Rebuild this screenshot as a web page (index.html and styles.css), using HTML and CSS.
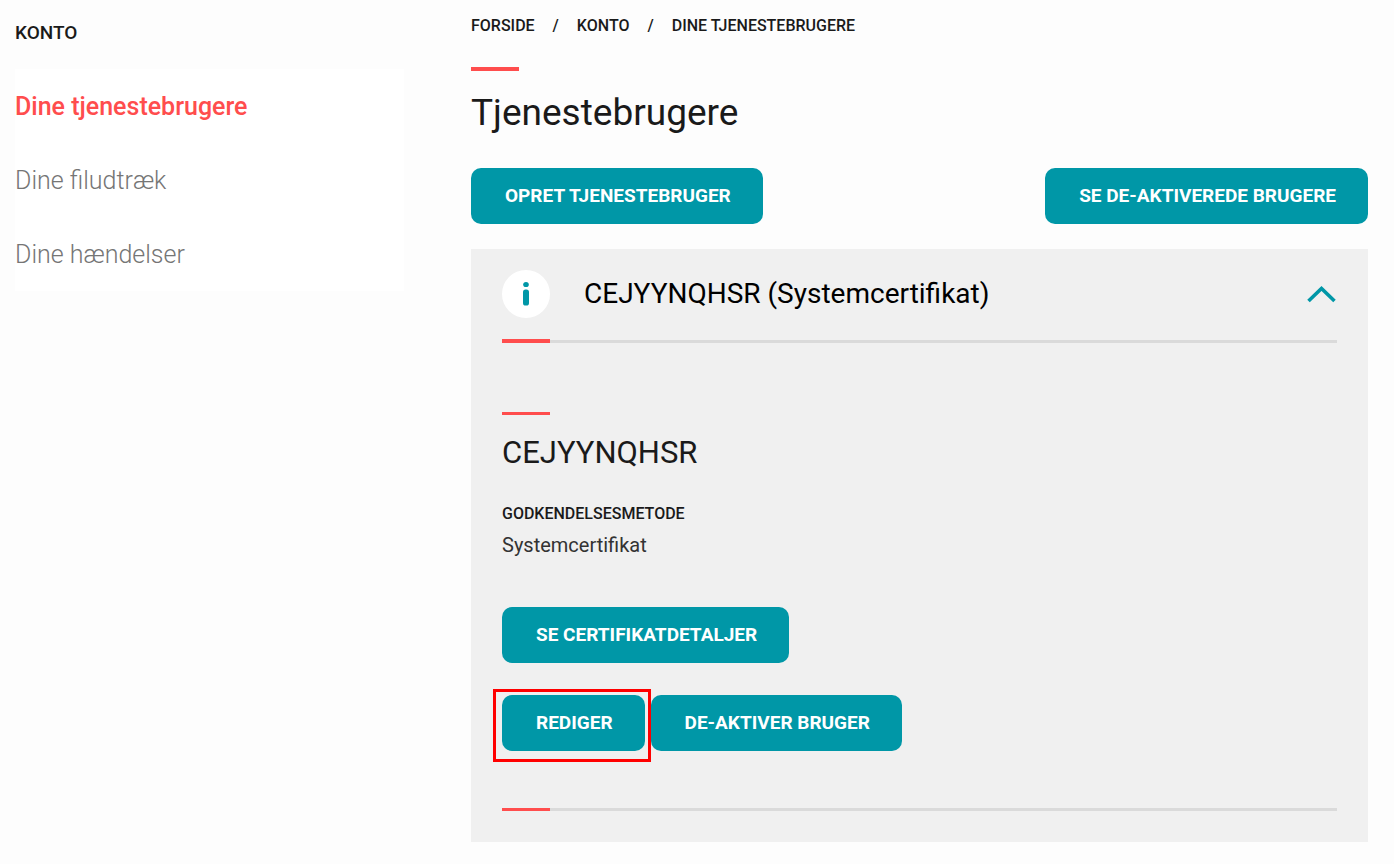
FILE: index.html
```html
<!DOCTYPE html>
<html lang="da">
<head>
  <meta charset="UTF-8" />
  <meta name="viewport" content="width=device-width, initial-scale=1.0" />
  <title>Dine tjenestebrugere</title>
  <link rel="stylesheet" href="styles.css">
</head>
<body>
  <div class="page">
    <aside class="sidebar">
      <h2 class="sidebar-title">Konto</h2>
      <nav class="sidebar-nav">
        <a class="active" href="#tjenestebrugere">Dine tjenestebrugere</a>
        <a href="#filudtraek">Dine filudtræk</a>
        <a href="#haendelser">Dine hændelser</a>
      </nav>
    </aside>

    <main class="content">
      <nav class="breadcrumb">
        <a href="#forside">Forside</a>
        <span>/</span>
        <a href="#konto">Konto</a>
        <span>/</span>
        <a href="#tjenestebrugere">Dine tjenestebrugere</a>
      </nav>

      <h1 class="page-title">Tjenestebrugere</h1>

      <div class="toolbar">
        <button class="btn" type="button">Opret tjenestebruger</button>
        <button class="btn" type="button">Se de-aktiverede brugere</button>
      </div>

      <section class="panel">
        <button class="panel-header" type="button" aria-expanded="true">
          <svg class="info-icon" viewBox="0 0 48 48" aria-hidden="true">
            <circle cx="24" cy="24" r="24" fill="#fff" />
            <ellipse cx="24" cy="14.5" rx="2.8" ry="2.6" fill="#0097a7" />
            <rect x="21" y="19.5" width="6" height="16" rx="2.6" fill="#0097a7" />
          </svg>
          <span class="panel-name">CEJYYNQHSR (Systemcertifikat)</span>
          <svg class="chevron" viewBox="0 0 30 18" aria-hidden="true">
            <path d="M1.5 16 L14.5 3.5 L27.5 16" fill="none" stroke="#0097a7" stroke-width="3.6" />
          </svg>
        </button>

        <div class="panel-body">
          <h2 class="user-name">CEJYYNQHSR</h2>
          <dl class="details">
            <dt>Godkendelsesmetode</dt>
            <dd>Systemcertifikat</dd>
          </dl>
          <button class="btn" type="button">Se certifikatdetaljer</button>
          <div class="actions">
            <div class="highlight">
              <button class="btn" type="button">Rediger</button>
            </div>
            <button class="btn" type="button">De-aktiver bruger</button>
          </div>
        </div>
      </section>
    </main>
  </div>
</body>
</html>
```
FILE: styles.css
```css
* { box-sizing: border-box; }
body {
  font-family: Roboto, "Liberation Sans", sans-serif;
  margin: 0;
  background: #fdfdfd;
  color: #1a1a1a;
}
a {
  color: inherit;
  text-decoration: none;
}
button {
  font-family: inherit;
  border: none;
  cursor: pointer;
}
.page {
  display: grid;
  grid-template-columns: 389px 1fr;
  column-gap: 67px;
  padding: 0 26px 0 15px;
}

/* sidebar */
.sidebar-title {
  margin: 0;
  padding: 22px 0 25px;
  font-size: 19px;
  line-height: 22px;
  font-weight: 500;
  text-transform: uppercase;
}
.sidebar-nav {
  display: flex;
  flex-direction: column;
  background: #fff;
}
.sidebar-nav a {
  padding: 23px 0 21px;
  font-size: 25px;
  line-height: 30px;
  font-weight: 300;
  color: #757575;
}
.sidebar-nav .active {
  font-weight: 500;
  color: #ff4d4d;
}

/* content */
.breadcrumb {
  display: flex;
  gap: 18px;
  padding-top: 16px;
  font-size: 16px;
  line-height: 20px;
  font-weight: 500;
  text-transform: uppercase;
}
.page-title {
  margin: 31px 0 30px;
  font-size: 37px;
  line-height: 50px;
  font-weight: 400;
}
.page-title::before,
.user-name::before {
  content: "";
  display: block;
  width: 48px;
  height: 3px;
  background: #ff4d4d;
}
.page-title::before {
  height: 4px;
  margin-bottom: 17px;
}
.toolbar {
  display: flex;
  justify-content: space-between;
  margin-bottom: 25px;
}
.btn {
  padding: 16px 32px 16px 34px;
  border-radius: 10px;
  background: #0097a7;
  color: #fff;
  font-size: 19px;
  line-height: 24px;
  font-weight: 700;
  text-transform: uppercase;
}
.btn:hover {
  background: #007f8c;
}

/* panel */
.panel {
  padding: 21px 31px 31px;
  background: #f0f0f0;
}
.panel-header {
  display: flex;
  align-items: center;
  width: 100%;
  padding: 0 0 21px;
  background: none;
  color: #000;
  text-align: left;
}
.info-icon {
  width: 48px;
  height: 48px;
  margin-right: 34px;
}
.panel-name {
  flex: 1;
  font-size: 28px;
  line-height: 44px;
}
.chevron {
  width: 30px;
  height: 18px;
}
.panel-body::before,
.panel-body::after {
  content: "";
  display: block;
  height: 3px;
  background: linear-gradient(#ff4d4d, #ff4d4d) left / 48px 100% no-repeat, #dadada;
}
.panel-body::before {
  height: 4px;
  background:
    linear-gradient(#ff4d4d, #ff4d4d) left / 48px 100% no-repeat,
    linear-gradient(#dadada, #dadada) bottom / 100% 3px no-repeat;
}
.user-name {
  margin: 69px 0 29px;
  font-size: 31px;
  line-height: 40px;
  font-weight: 400;
}
.user-name::before {
  margin-bottom: 18px;
}
.details {
  margin: 0 0 47px;
}
.details dt {
  font-size: 16px;
  line-height: 24px;
  font-weight: 500;
  text-transform: uppercase;
}
.details dd {
  margin: 4px 0 0;
  font-size: 20px;
  line-height: 30px;
  color: #333;
}
.actions {
  display: flex;
  align-items: flex-start;
  margin: 26px 0 46px -9px;
}
.highlight {
  padding: 3px 3px 8px 6px;
  border: 3px solid #f00;
}
.actions > .btn {
  margin-top: 6px;
}
```
